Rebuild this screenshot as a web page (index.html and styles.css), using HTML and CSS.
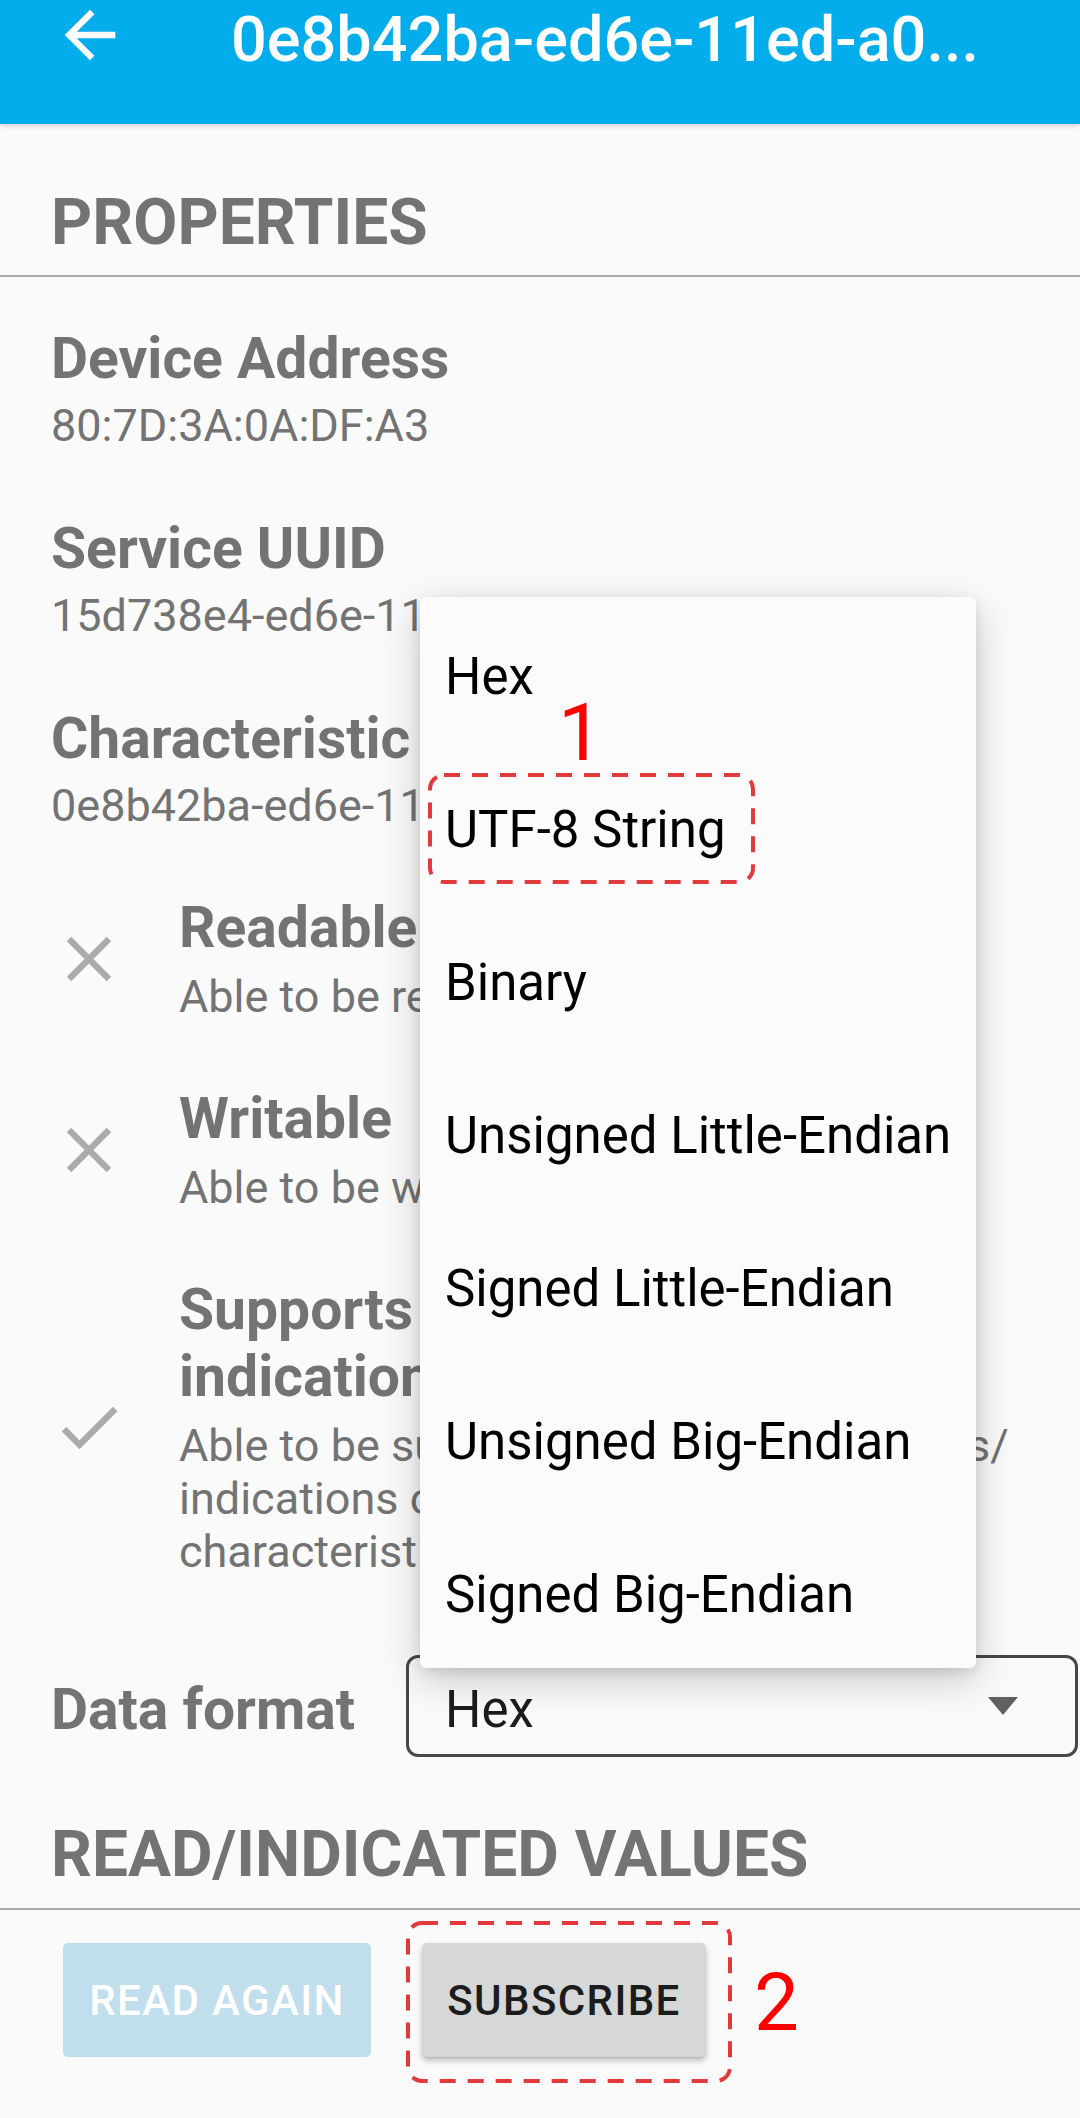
FILE: index.html
```html
<!DOCTYPE html>
<html lang="en">
<head>
<meta charset="utf-8">
<title>Characteristic</title>
<link rel="stylesheet" href="styles.css">
</head>
<body>
<div class="screen">
  <header class="appbar">
    <svg class="appbar-back" viewBox="0 0 24 24" aria-hidden="true"><path d="M20 11H7.83l5.59-5.59L12 4l-8 8 8 8 1.41-1.41L7.83 13H20v-2z"/></svg>
    <h1 class="appbar-title">0e8b42ba-ed6e-11ed-a0...</h1>
  </header>

  <main class="content">
    <h2 class="section-title section-first">PROPERTIES</h2>
    <div class="divider"></div>

    <div class="fields">
      <div class="field field-first">
        <div class="label">Device Address</div>
        <div class="value">80:7D:3A:0A:DF:A3</div>
      </div>
      <div class="field">
        <div class="label">Service UUID</div>
        <div class="value">15d738e4-ed6e-11ed-a05b-0242ac120003</div>
      </div>
      <div class="field">
        <div class="label">Characteristic UUID</div>
        <div class="value">0e8b42ba-ed6e-11ed-a05b-0242ac120003</div>
      </div>
    </div>

    <div class="prop">
      <svg class="prop-icon" viewBox="0 0 24 24" aria-hidden="true"><path d="M19 6.41L17.59 5 12 10.59 6.41 5 5 6.41 10.59 12 5 17.59 6.41 19 12 13.41 17.59 19 19 17.59 13.41 12z"/></svg>
      <div class="prop-text">
        <div class="label">Readable</div>
        <div class="sub">Able to be read from</div>
      </div>
    </div>
    <div class="prop">
      <svg class="prop-icon" viewBox="0 0 24 24" aria-hidden="true"><path d="M19 6.41L17.59 5 12 10.59 6.41 5 5 6.41 10.59 12 5 17.59 6.41 19 12 13.41 17.59 19 19 17.59 13.41 12z"/></svg>
      <div class="prop-text">
        <div class="label">Writable</div>
        <div class="sub">Able to be written to</div>
      </div>
    </div>
    <div class="prop">
      <svg class="prop-icon" viewBox="0 0 24 24" aria-hidden="true"><path d="M9 16.17L4.83 12l-1.42 1.41L9 19 21 7l-1.41-1.41z"/></svg>
      <div class="prop-text">
        <div class="label">Supports notifications/<br>indications</div>
        <div class="sub">Able to be subscribed to for notifications/<br>indications of changes to the<br>characteristic</div>
      </div>
    </div>

    <div class="format-row">
      <div class="label format-label">Data format</div>
      <div class="spinner">
        <span class="spinner-value">Hex</span>
        <span class="spinner-arrow"></span>
      </div>
    </div>

    <h2 class="section-title section-read">READ/INDICATED VALUES</h2>
  </main>

  <div class="divider divider-bottom"></div>
  <footer class="actions">
    <button class="btn btn-disabled" type="button">READ AGAIN</button>
    <button class="btn btn-raised" type="button">SUBSCRIBE</button>
  </footer>

  <ul class="menu">
    <li class="menu-item">Hex</li>
    <li class="menu-item">UTF-8 String</li>
    <li class="menu-item">Binary</li>
    <li class="menu-item">Unsigned Little-Endian</li>
    <li class="menu-item">Signed Little-Endian</li>
    <li class="menu-item">Unsigned Big-Endian</li>
    <li class="menu-item">Signed Big-Endian</li>
  </ul>

  <svg class="mark mark-box-1" viewBox="0 0 327 111" aria-hidden="true"><rect x="2" y="2" width="323" height="107" rx="14" ry="14"/></svg>
  <div class="mark mark-num mark-num-1">1</div>
  <svg class="mark mark-box-2" viewBox="0 0 326 162" aria-hidden="true"><rect x="2" y="2" width="322" height="158" rx="14" ry="14"/></svg>
  <div class="mark mark-num mark-num-2">2</div>
</div>
</body>
</html>
```

FILE: styles.css
```css
* {
  box-sizing: border-box;
  margin: 0;
  padding: 0;
}

body {
  margin: 0;
  background: #fafafa;
  font-family: Roboto, "Noto Sans", "Liberation Sans", sans-serif;
}

.screen {
  position: relative;
  width: 1080px;
  height: 2118px;
  overflow: hidden;
  background: #fafafa;
}

/* App bar */
.appbar {
  position: relative;
  z-index: 1;
  height: 124px;
  background: #03adec;
  display: flex;
  align-items: flex-start;
  box-shadow: 0 2px 5px rgba(0, 0, 0, 0.16);
}

.appbar-back {
  flex: none;
  width: 76px;
  height: 76px;
  margin-left: 52px;
  margin-top: -3px;
  fill: #ffffff;
}

.appbar-title {
  margin-left: 103px;
  margin-top: 4px;
  font-size: 63px;
  font-weight: 500;
  line-height: 72px;
  color: #ffffff;
  white-space: nowrap;
}

/* Sections */
.section-title {
  padding-left: 51px;
  font-size: 64px;
  font-weight: 700;
  line-height: 76px;
  color: #737373;
  white-space: nowrap;
}

.section-first {
  margin-top: 61px;
}

.section-read {
  margin-top: 60px;
}

.divider {
  height: 2px;
  margin-top: 14px;
  background: #a9a9a9;
}

.divider-bottom {
  margin-top: 15px;
}

.label {
  font-size: 57px;
  font-weight: 700;
  line-height: 67px;
  color: #737373;
  white-space: nowrap;
}

.value {
  margin-top: 8px;
  font-size: 45px;
  line-height: 52px;
  color: #737373;
  white-space: nowrap;
}

.fields {
  padding: 0 51px;
}

.field {
  margin-top: 63px;
}

.field-first {
  margin-top: 48px;
}

/* Property rows */
.prop {
  display: flex;
  align-items: center;
  margin-top: 62px;
  padding: 0 51px;
}

.prop-icon {
  flex: none;
  width: 76px;
  height: 76px;
  fill: #ababab;
}

.prop-text {
  margin-left: 52px;
}

.sub {
  margin-top: 9px;
  font-size: 45px;
  line-height: 53px;
  color: #737373;
  white-space: nowrap;
}

/* Data format */
.format-row {
  display: flex;
  align-items: center;
  margin-top: 77px;
  padding-left: 51px;
  padding-right: 2px;
}

.format-label {
  margin-top: 6px;
}

.spinner {
  width: 672px;
  height: 102px;
  margin-left: auto;
  border: 3px solid #474747;
  border-radius: 12px;
  display: flex;
  align-items: center;
  justify-content: space-between;
  padding-left: 36px;
  padding-right: 57px;
}

.spinner-value {
  margin-top: 8px;
  font-size: 51px;
  line-height: 60px;
  color: #1c1c1c;
}

.spinner-arrow {
  width: 0;
  height: 0;
  border-left: 15px solid transparent;
  border-right: 15px solid transparent;
  border-top: 18px solid #616161;
}

/* Bottom actions */
.actions {
  display: flex;
  gap: 51px;
  padding-top: 33px;
  padding-left: 63px;
}

.btn {
  height: 114px;
  border: none;
  border-radius: 5px;
  font-family: Roboto, "Noto Sans", "Liberation Sans", sans-serif;
  font-size: 42px;
  font-weight: 500;
  letter-spacing: 1.4px;
}

.btn-disabled {
  width: 308px;
  background: #c0deec;
  color: #ffffff;
}

.btn-raised {
  width: 284px;
  background: #d6d7d7;
  color: #1c1c1c;
  box-shadow: 0 4px 6px rgba(0, 0, 0, 0.22), 0 1px 2px rgba(0, 0, 0, 0.12);
}

/* Dropdown menu overlay */
.menu {
  position: absolute;
  left: 420px;
  top: 597px;
  width: 556px;
  list-style: none;
  background: #fbfbfb;
  border-radius: 6px;
  box-shadow: 0 12px 40px rgba(0, 0, 0, 0.2), 0 4px 12px rgba(0, 0, 0, 0.1);
  z-index: 2;
}

.menu-item {
  height: 153px;
  display: flex;
  align-items: center;
  padding-left: 25px;
  padding-top: 6px;
  font-size: 51px;
  line-height: 60px;
  color: #000000;
  white-space: nowrap;
}

/* Red annotations */
.mark {
  position: absolute;
  z-index: 3;
}

.mark rect {
  fill: none;
  stroke: #e03a3c;
  stroke-width: 4;
  stroke-dasharray: 16 12;
}

.mark-box-1 {
  left: 428px;
  top: 773px;
  width: 327px;
  height: 111px;
}

.mark-box-2 {
  left: 406px;
  top: 1921px;
  width: 326px;
  height: 162px;
}

.mark-num {
  font-size: 80px;
  line-height: 80px;
  color: #ff0000;
}

.mark-num-1 {
  left: 558px;
  top: 693px;
}

.mark-num-2 {
  left: 754px;
  top: 1963px;
}
```
